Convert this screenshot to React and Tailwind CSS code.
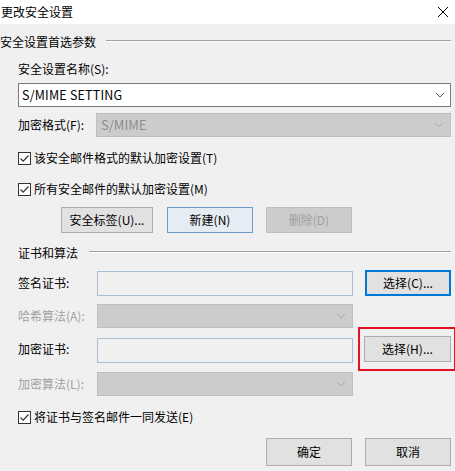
import React from "react";

const font = { fontFamily: '"Noto Sans CJK SC", "Noto Sans", sans-serif' };

function Chevron({ color = "#606060" }) {
  return (
    <svg width="10" height="6" viewBox="0 0 10 6" className="shrink-0">
      <path d="M1 1 L5 5 L9 1" fill="none" stroke={color} strokeWidth="1" />
    </svg>
  );
}

function Check() {
  return (
    <div className="w-[13px] h-[13px] border border-[#333] bg-white flex items-center justify-center shrink-0">
      <svg width="11" height="11" viewBox="0 0 11 11">
        <path d="M1.5 5.5 L4.2 8.2 L9.5 2.5" fill="none" stroke="#333" strokeWidth="1.2" />
      </svg>
    </div>
  );
}

function Btn({ children, variant = "normal", className = "" }) {
  const v =
    variant === "default"
      ? "bg-[#e5ecf3] border border-[#6d9ccd] text-black"
      : variant === "focus"
      ? "bg-[#e1e1e1] border-2 border-[#0078d7] text-black"
      : variant === "disabled"
      ? "bg-[#cccccc] border border-[#bfbfbf] text-[#a0a0a0]"
      : "bg-[#e1e1e1] border border-[#adadad] text-black";
  return (
    <div className={`h-[26px] w-[86px] flex items-center justify-center text-[12px] ${v} ${className}`}>
      {children}
    </div>
  );
}

function DisabledCombo({ className = "", text = "" }) {
  return (
    <div className={`h-[24px] bg-[#cccccc] border border-[#bfbfbf] flex items-center justify-between pl-[4px] pr-[6px] ${className}`}>
      <span className="text-[13px] text-[#8c8c8c]">{text}</span>
      <Chevron color="#a8a8a8" />
    </div>
  );
}

function Input({ className = "" }) {
  return <div className={`h-[25px] bg-[#f0f0f0] border border-[#a9bdd6] ${className}`} />;
}

export default function App() {
  return (
    <div className="w-[455px] h-[471px] bg-[#f0f0f0] text-[12px] text-black overflow-hidden" style={font}>
      <div className="h-[24px] bg-white flex items-center justify-between pl-[1px] pr-[6px]">
        <span className="text-[12px] leading-none">更改安全设置</span>
        <svg width="12" height="12" viewBox="0 0 12 12">
          <path d="M1 1 L11 11 M11 1 L1 11" stroke="#000" strokeWidth="1" />
        </svg>
      </div>

      <div className="pr-[4px]">
        <div className="mt-[10px] h-[16px] flex items-center">
          <span className="leading-none">安全设置首选参数</span>
          <div className="flex-1 ml-[10px] border-t border-[#a0a0a0] border-b border-b-white mt-[-2px]" />
        </div>

        <div className="pl-[18px]">
          <div className="mt-[11px] h-[16px] flex items-center">安全设置名称(S):</div>
          <div className="mt-[6px] h-[24px] bg-white border border-[#7a7a7a] flex items-center justify-between pl-[3px] pr-[5px]">
            <span className="text-[12.5px] tracking-[0.2px]">S/MIME SETTING</span>
            <Chevron />
          </div>
          <div className="mt-[6px] h-[24px] flex items-center">
            <span className="w-[78px] shrink-0">加密格式(F):</span>
            <DisabledCombo className="flex-1" text="S/MIME" />
          </div>

          <div className="mt-[13px] h-[16px] flex items-center gap-[3px]">
            <Check />
            <span>该安全邮件格式的默认加密设置(T)</span>
          </div>
          <div className="mt-[15px] h-[16px] flex items-center gap-[3px]">
            <Check />
            <span>所有安全邮件的默认加密设置(M)</span>
          </div>

          <div className="mt-[10px] flex items-center pl-[43px]">
            <Btn className="w-[92px]">安全标签(U)...</Btn>
            <Btn variant="default" className="ml-[14px]">新建(N)</Btn>
            <Btn variant="disabled" className="ml-[13px]">删除(D)</Btn>
          </div>

          <div className="mt-[12px] h-[16px] flex items-center">
            <span className="leading-none">证书和算法</span>
            <div className="flex-1 ml-[11px] border-t border-[#a0a0a0] border-b border-b-white mt-[-2px]" />
          </div>

          <div className="mt-[9px] h-[26px] flex items-center">
            <span className="w-[79px] shrink-0">签名证书:</span>
            <Input className="w-[256px] mt-[1px]" />
            <Btn variant="focus" className="ml-[12px]">选择(C)...</Btn>
          </div>

          <div className="mt-[8px] h-[24px] flex items-center">
            <span className="w-[79px] shrink-0 text-[#a0a0a0]">哈希算法(A):</span>
            <DisabledCombo className="w-[256px]" />
          </div>

          <div className="mt-[8px] h-[26px] flex items-center">
            <span className="w-[79px] shrink-0">加密证书:</span>
            <Input className="w-[256px] mt-[2px]" />
            <div className="relative ml-[11px]">
              <Btn className="w-[87px]">选择(H)...</Btn>
              <div className="absolute left-[-6px] top-[-9px] w-[98px] h-[44px] border-2 border-[#e81123]" />
            </div>
          </div>

          <div className="mt-[10px] h-[24px] flex items-center">
            <span className="w-[79px] shrink-0 text-[#a0a0a0]">加密算法(L):</span>
            <DisabledCombo className="w-[256px]" />
          </div>

          <div className="mt-[13px] h-[16px] flex items-center gap-[3px]">
            <Check />
            <span>将证书与签名邮件一同发送(E)</span>
          </div>

          <div className="mt-[13px] flex items-center justify-end">
            <Btn className="h-[28px]">确定</Btn>
            <Btn className="ml-[13px] h-[28px]">取消</Btn>
          </div>
        </div>
      </div>
    </div>
  );
}
